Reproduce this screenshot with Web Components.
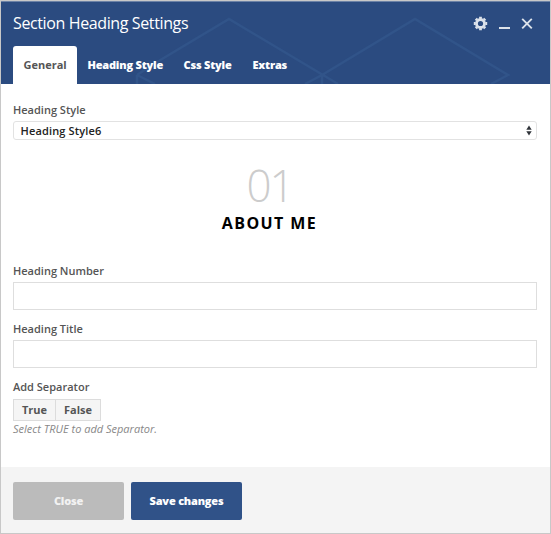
<!DOCTYPE html>
<html lang="en"><head><meta charset="utf-8"><title>Section Heading Settings</title>
<style>
html,body{margin:0;height:100%;overflow:hidden;background:#fff}
body{font-family:"Open Sans","Noto Sans",sans-serif;font-size:11px;color:#555}
</style></head><body>
<settings-panel>
  <panel-header slot="header" heading="Section Heading Settings">
    <panel-tab active>General</panel-tab>
    <panel-tab style="--w:75px">Heading Style</panel-tab>
    <panel-tab style="--w:48px">Css Style</panel-tab>
    <panel-tab style="--w:34px">Extras</panel-tab>
  </panel-header>
  <form-field label="Heading Style"><select-box>Heading Style6</select-box></form-field>
  <heading-preview number="01">ABOUT ME</heading-preview>
  <form-field label="Heading Number"><text-box></text-box></form-field>
  <form-field label="Heading Title"><text-box></text-box></form-field>
  <form-field label="Add Separator" hint="Select TRUE to add Separator."><toggle-pair></toggle-pair></form-field>
  <action-button slot="footer" muted>Close</action-button>
  <action-button slot="footer">Save changes</action-button>
</settings-panel>
<script>
class Base extends HTMLElement{
  connectedCallback(){ if(!this.shadowRoot) this.attachShadow({mode:'open'}).innerHTML=this.view(); }
  attr(n){ return this.getAttribute(n)||''; }
}
customElements.define('settings-panel',class extends Base{view(){return `
<style>
:host{display:flex;flex-direction:column;box-sizing:border-box;width:551px;height:534px;border:1px solid #c8c8c8;background:#fff}
main{flex:1;display:flex;flex-direction:column;padding:16.5px 13px 0 12px}
footer{display:flex;gap:7px;height:51px;padding:15px 12px 0;background:#f4f4f4}
</style><slot name="header"></slot><main><slot></slot></main><footer><slot name="footer"></slot></footer>`}});

customElements.define('panel-header',class extends Base{view(){return `
<style>
:host{display:flex;flex-direction:column;justify-content:space-between;position:relative;height:83px;background:#2b4b80;box-shadow:inset 0 1px #6c82a6}
.art{position:absolute;inset:0;width:549px;height:83px}
.bar,nav{position:relative;display:flex}
.bar{justify-content:space-between;padding:11px 17px 0 12px}
h1{margin:0;font-weight:400;font-size:16px;line-height:23px;color:#fff;letter-spacing:-.38px;white-space:nowrap}
.tools{display:flex;gap:11px;padding-top:4px}
nav{padding-left:12px;height:38px}
</style>
<svg class="art" viewBox="1 1 549 83" fill="none" stroke="#315489" stroke-width="2.5"><path d="M152 65L229 19L323 75L338 84M137 75V84M137 75L155 84M137 75L152 65M305 84L322 75L415 19L508 75L491 84M322 75V84"/></svg>
<div class="bar"><h1>${this.attr('heading')}</h1><div class="tools">
<svg width="15" height="15" viewBox="0 0 15 15" fill="none" stroke="#dce2ea"><circle cx="7.5" cy="7.5" r="4" stroke-width="2.8"/><path stroke-width="2.8" d="M7.5.8V2.7M7.5 12.3v1.9M.8 7.5h1.9M12.3 7.5h1.9M2.8 2.8l1.3 1.3M10.9 10.9l1.3 1.3M2.8 12.2l1.3-1.3M10.9 4.1l1.3-1.3"/></svg>
<svg width="11" height="15"><path d="M0 12h11" stroke="#dce2ea" stroke-width="2"/></svg>
<svg width="12" height="15" viewBox="0 0 12 15"><path d="M1.2 2.8l9.6 9.6M10.8 2.8l-9.6 9.6" stroke="#dce2ea" stroke-width="1.9"/></svg>
</div></div><nav><slot></slot></nav>`}});

customElements.define('panel-tab',class extends Base{view(){return `
<style>
:host{display:block;box-sizing:border-box;width:calc(var(--w,43px) + 21px);height:38px;padding-left:10.5px;border-radius:3px 3px 0 0;font-weight:800;font-size:11px;line-height:38px;letter-spacing:-.2px;color:#fff;white-space:nowrap}
:host([active]){background:#fff;color:#555;font-weight:700;letter-spacing:0}
</style><slot></slot>`}});

customElements.define('form-field',class extends Base{view(){const h=this.attr('hint');return `
<style>
:host{display:block;margin-bottom:10px}
label{display:block;height:20.3px;line-height:18px;font-weight:600;font-size:11px;color:#555}
.hint{line-height:16px;font-style:italic;color:#888}
</style><label>${this.attr('label')}</label><slot></slot>${h?`<div class="hint">${h}</div>`:''}`}});

customElements.define('select-box',class extends Base{view(){return `
<style>
:host{display:flex;justify-content:space-between;align-items:center;box-sizing:border-box;height:19px;padding:0 4px 0 6.5px;border:1px solid #e2e2e2;border-radius:3px;font-weight:600;letter-spacing:.15px;color:#222}
</style><slot></slot><svg width="6" height="11" viewBox="0 0 6 11" fill="#30343a"><path d="M3 .5L5.7 4.7H.3zM.3 6.3h5.4L3 10.5z"/></svg>`}});

customElements.define('text-box',class extends Base{view(){return `
<style>:host{display:block}input{display:block;box-sizing:border-box;width:100%;height:28px;margin:0;border:1px solid #dedede;background:#fff;padding:0 6px;outline:0}</style><input type="text">`}});

customElements.define('heading-preview',class extends Base{view(){return `
<style>
:host{display:flex;flex-direction:column;align-items:center;height:112px;padding:5px 11px 0 0;box-sizing:border-box}
.n{font-size:44px;line-height:60px;font-weight:300;color:#ccc;letter-spacing:-2px}
.t{font-size:16px;line-height:22px;font-weight:700;color:#000;letter-spacing:1.4px;margin-top:-3px}
</style><div class="n">${this.attr('number')}</div><div class="t"><slot></slot></div>`}});

customElements.define('toggle-pair',class extends Base{view(){return `
<style>
:host{display:flex;width:88px;height:22px;box-sizing:border-box;border:1px solid #dcdcdc;background:#f5f5f5}
span{flex:1;text-align:center;font-weight:700;line-height:20px;color:#555}
.on{flex:0 0 41px;border-right:1px solid #dcdcdc}
</style><span class="on">True</span><span>False</span>`}});

customElements.define('action-button',class extends Base{view(){return `
<style>
:host{display:block;width:111px;height:38px}
button{width:100%;height:100%;padding:0;border:0;border-radius:2px;background:#305288;color:#fff;font:800 11px/38px "Open Sans",sans-serif;letter-spacing:-.2px}
:host([muted]) button{background:#bbb;color:#f2f2f2}
</style><button><slot></slot></button>`}});
</script></body></html>
